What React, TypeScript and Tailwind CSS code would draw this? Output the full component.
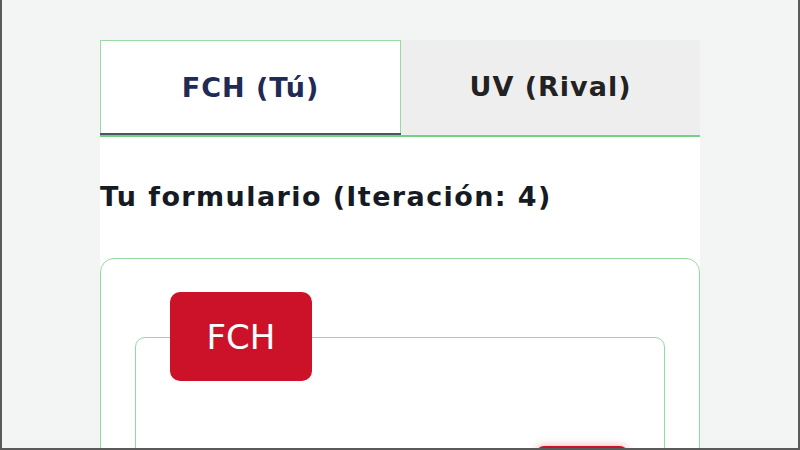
import React from 'react';

const font = { fontFamily: '"DejaVu Sans", "Liberation Sans", sans-serif' };

const App: React.FC = () => {
  return (
    <div
      className="w-[800px] h-[450px] overflow-hidden bg-[#f3f4f4] border-l-2 border-r-2 border-b-2 border-[#5a5a5a] flex justify-center"
      style={font}
    >
      <div className="w-[600px] pt-[40px] flex flex-col">
        {/* Tabs */}
        <div className="flex shrink-0 h-[97px] border-b-2 border-[#74d084]">
          <div className="relative w-[301px] bg-white border border-b-0 border-[#9bdaa5] flex items-center justify-center">
            <span className="text-[27px] font-bold tracking-[1px] text-[#1f2a55]">FCH (Tú)</span>
            <div className="absolute left-[-1px] right-[-1px] bottom-0 h-[2px] bg-[#4b5563]" />
          </div>
          <div className="flex-1 bg-[#eeeeee] flex items-center justify-center">
            <span className="text-[27px] font-bold tracking-[1px] text-[#222222]">UV (Rival)</span>
          </div>
        </div>

        {/* Panel */}
        <div className="flex-1 bg-white pt-[44px]">
          <h2 className="text-[27px] leading-[32px] font-bold tracking-[1.4px] text-[#161a24]">Tu formulario (Iteración: 4)</h2>

          <div className="mt-[45px] h-[300px] border border-[#94d99f] rounded-[14px] px-[34px] pt-[78px]">
            <div className="relative h-[200px] border border-[#94d99f] rounded-[10px]">
              <div className="absolute -top-[46px] left-[34px] w-[142px] h-[89px] bg-[#cc1229] rounded-[10px] flex items-center justify-center">
                <span className="text-[34px] text-white mt-[2px]">FCH</span>
              </div>
              <div className="absolute top-[108px] left-[400px] w-[92px] h-[30px] bg-[#cc1229] rounded-t-[8px] shadow-[0_0_8px_rgba(204,18,41,0.35)]" />
            </div>
          </div>
        </div>
      </div>
    </div>
  );
};

export default App;
